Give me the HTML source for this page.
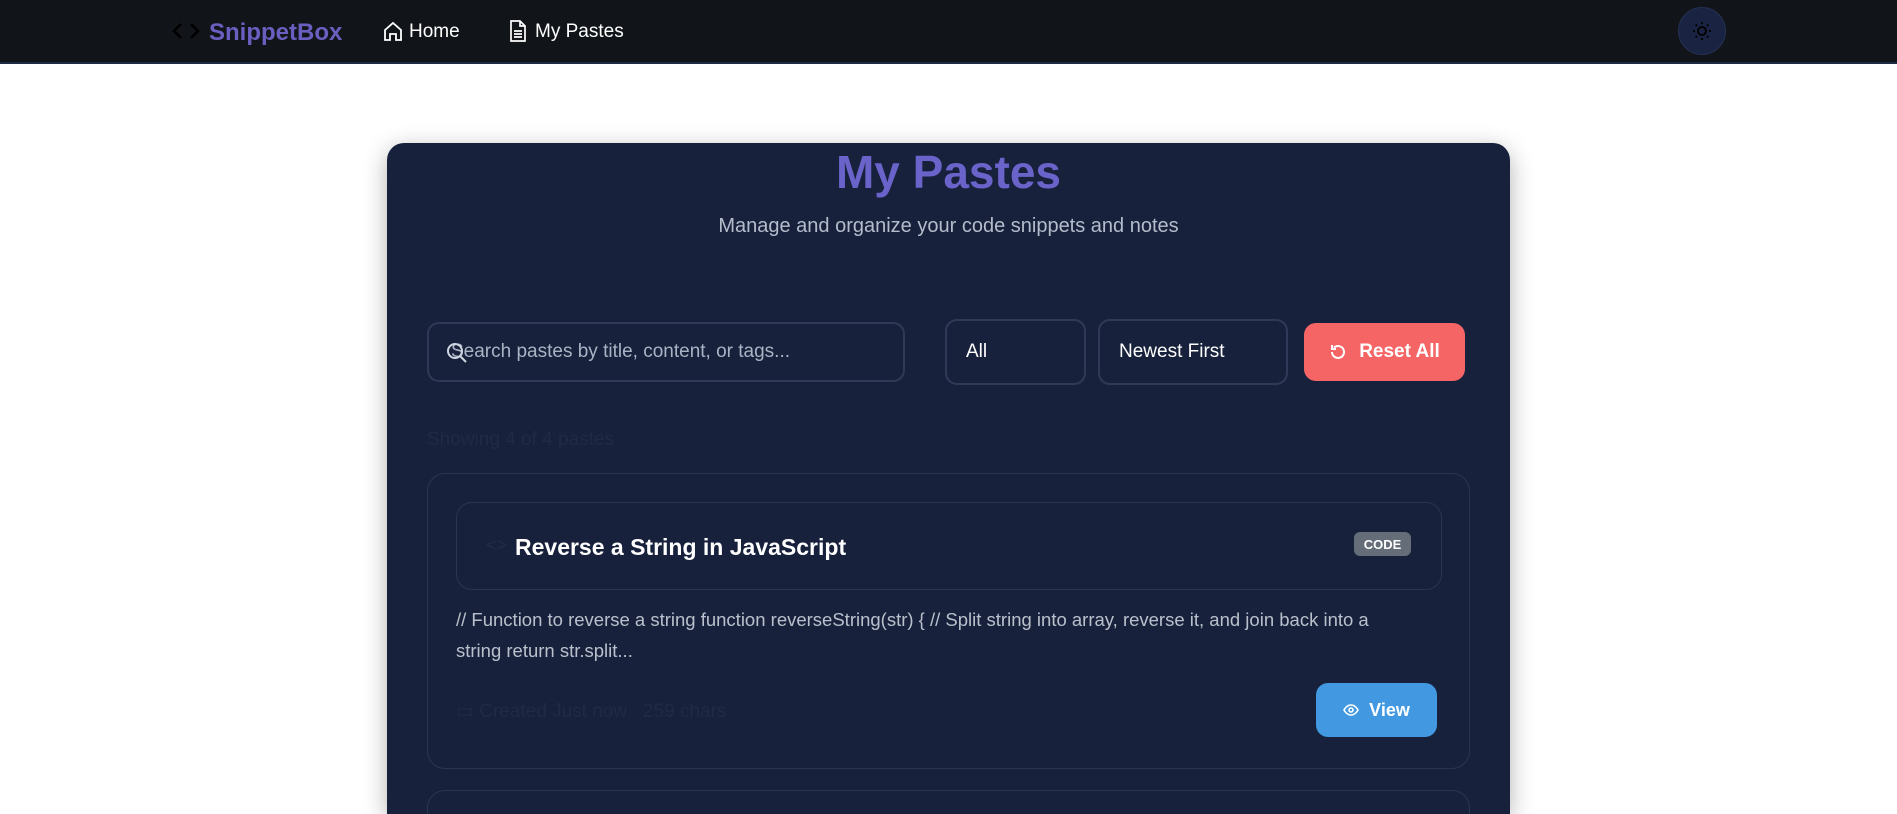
<!DOCTYPE html>
<html style="width:1897px;height:814px;overflow:hidden"><head><meta charset="utf-8"><style>
*{box-sizing:border-box;margin:0;padding:0}
body{width:1897px;height:814px;overflow:hidden;background:#fff;font-family:"Liberation Sans",sans-serif;position:relative}
.nav{position:absolute;left:0;top:0;width:1897px;height:64px;background:#111519;border-bottom:2px solid #1e2a44}
.abs{position:absolute}
.card{position:absolute;left:387px;top:143px;width:1123px;height:671px;background:#17213c;border-radius:17px 17px 0 0;box-shadow:0 6px 24px rgba(0,0,0,.3);overflow:hidden}
.field{position:absolute;border:2px solid #2e3a57;border-radius:12px;color:#fff;font-size:19px;display:flex;align-items:center}
</style></head><body>
<div class="nav">
 <svg class="abs" style="left:172px;top:21px" width="28" height="20" viewBox="0 0 28 20" fill="none" stroke="#000" stroke-width="2.6"><path d="M9 3L2 10l7 7M19 3l7 7-7 7"/></svg>
 <div class="abs" style="left:209px;top:19px;font-size:24px;font-weight:bold;color:#6a5fc1">SnippetBox</div>
 <svg class="abs" style="left:383px;top:21px" width="20" height="21" viewBox="0 0 20 21" fill="none" stroke="#fff" stroke-width="1.8"><path d="M2 9l8-7 8 7v10H13v-6H7v6H2z"/></svg>
 <div class="abs" style="left:409px;top:21px;font-size:19px;color:#fff">Home</div>
 <svg class="abs" style="left:509px;top:20px" width="18" height="22" viewBox="0 0 18 22" fill="none" stroke="#fff" stroke-width="1.7"><path d="M2 1h9l5 5v15H2z M11 1v5h5 M5 11h8 M5 14h8 M5 17h8"/></svg>
 <div class="abs" style="left:535px;top:21px;font-size:19px;color:#fff">My Pastes</div>
 <div class="abs" style="left:1678px;top:7px;width:48px;height:48px;border-radius:50%;background:#1a2442;border:1px solid #253152"></div>
 <svg class="abs" style="left:1692px;top:21px" width="20" height="20" viewBox="0 0 20 20" fill="none" stroke="#000" stroke-width="1.8"><circle cx="10" cy="10" r="4"/><path d="M10 1v2M10 17v2M1 10h2M17 10h2M3.6 3.6l1.4 1.4M15 15l1.4 1.4M3.6 16.4L5 15M15 5l1.4-1.4"/></svg>
</div>
<div class="card">
 <div class="abs" style="left:0;width:1123px;top:2px;text-align:center;font-size:46px;font-weight:bold;color:#6a63c9">My Pastes</div>
 <div class="abs" style="left:0;width:1123px;top:72px;text-align:center;font-size:20px;color:#b4bccb">Manage and organize your code snippets and notes</div>
 <div class="field" style="left:40px;top:179px;width:478px;height:60px;padding-left:20px;color:#aab3c3">
  <svg width="22" height="22" viewBox="0 0 22 22" fill="none" stroke="#cfd5df" stroke-width="2" style="position:absolute;left:17px;top:18px"><circle cx="9" cy="9" r="7"/><path d="M14 14l6 6"/></svg>
  <span style="margin-left:2px">Search pastes by title, content, or tags...</span></div>
 <div class="field" style="left:558px;top:176px;width:141px;height:66px;padding-left:19px">All</div>
 <div class="field" style="left:711px;top:176px;width:190px;height:66px;padding-left:19px">Newest First</div>
 <div class="abs" style="left:917px;top:180px;width:161px;height:58px;background:#f56565;border-radius:12px;color:#fff;font-weight:bold;font-size:19px;display:flex;align-items:center;justify-content:center;gap:12px">
  <svg width="18" height="18" viewBox="0 0 18 18" fill="none" stroke="#fff" stroke-width="2"><path d="M3 9a6 6 0 1 0 2-4.5M3 2v4h4"/></svg>Reset All</div>
 <div class="abs" style="left:40px;top:286px;font-size:19px;color:#1f2a45">Showing 4 of 4 pastes</div>
 <div class="abs" style="left:40px;top:330px;width:1043px;height:296px;border:1px solid #2a3550;border-radius:18px">
  <div class="abs" style="left:28px;top:28px;width:986px;height:88px;border:1px solid #2a3550;border-radius:16px">
   <div class="abs" style="left:29px;top:32px;font-size:18px;color:#222c44">&lt;&gt;</div>
   <div class="abs" style="left:58px;top:31px;font-size:23px;font-weight:bold;color:#fff">Reverse a String in JavaScript</div>
   <div class="abs" style="left:897px;top:29px;width:57px;height:24px;background:#646d78;border-radius:6px;color:#fff;font-size:13px;font-weight:bold;display:flex;align-items:center;justify-content:center">CODE</div>
  </div>
  <div class="abs" style="left:28px;top:130px;width:940px;font-size:18.5px;line-height:31px;color:#b9c0cc">// Function to reverse a string function reverseString(str) { // Split string into array, reverse it, and join back into a string return str.split...</div>
  <div class="abs" style="left:28px;top:226px;font-size:19px;color:#1f2a45">▭ Created Just now &nbsp; 259 chars</div>
  <div class="abs" style="left:888px;top:209px;width:121px;height:54px;background:#4299e1;border-radius:12px;color:#fff;font-weight:bold;font-size:18px;display:flex;align-items:center;justify-content:center;gap:10px">
   <svg width="16" height="12" viewBox="0 0 16 12" fill="none" stroke="#fff" stroke-width="1.6"><path d="M1 6s2.5-5 7-5 7 5 7 5-2.5 5-7 5-7-5-7-5z"/><circle cx="8" cy="6" r="2"/></svg>View</div>
 </div>
 <div class="abs" style="left:40px;top:647px;width:1043px;height:200px;border:1px solid #2a3550;border-radius:18px"></div>
</div>
</body></html>
